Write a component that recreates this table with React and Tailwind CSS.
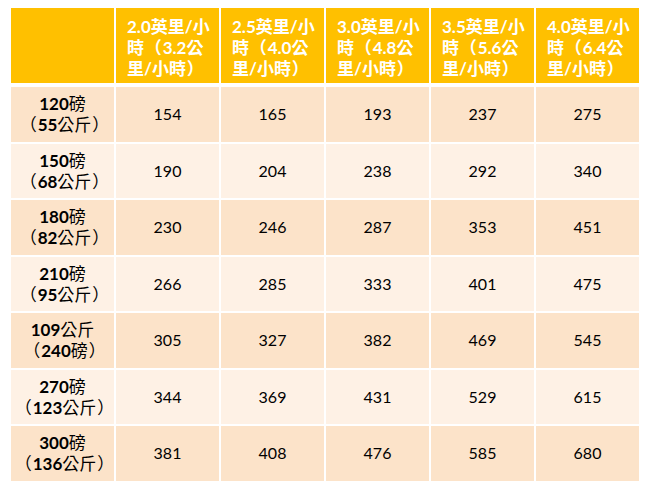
const speeds = [
  ["2.0英里/小", "時（3.2公", "里/小時）"],
  ["2.5英里/小", "時（4.0公", "里/小時）"],
  ["3.0英里/小", "時（4.8公", "里/小時）"],
  ["3.5英里/小", "時（5.6公", "里/小時）"],
  ["4.0英里/小", "時（6.4公", "里/小時）"],
];

const rows = [
  { a: "120磅", b: "（55公斤）", v: [154, 165, 193, 237, 275] },
  { a: "150磅", b: "（68公斤）", v: [190, 204, 238, 292, 340] },
  { a: "180磅", b: "（82公斤）", v: [230, 246, 287, 353, 451] },
  { a: "210磅", b: "（95公斤）", v: [266, 285, 333, 401, 475] },
  { a: "109公斤", b: "（240磅）", v: [305, 327, 382, 469, 545] },
  { a: "270磅", b: "（123公斤）", v: [344, 369, 431, 529, 615] },
  { a: "300磅", b: "（136公斤）", v: [381, 408, 476, 585, 680] },
];

// full-width parens get a full em box, digits go bold, CJK stays regular
function Cell({ text }) {
  const parts = text.match(/[0-9.]+|[（）]|[^0-9.（）]+/g);
  return parts.map((p, i) => {
    if (p === "（" || p === "）")
      return (
        <span key={i} className="inline-block w-[1.1em] text-center">
          {p}
        </span>
      );
    if (/^[0-9.]+$/.test(p))
      return (
        <span key={i} className="font-bold">
          {p}
        </span>
      );
    return <span key={i}>{p}</span>;
  });
}

export default function App() {
  return (
    <div className="w-[650px] h-[488px] bg-white pt-[8px] pl-[11px] font-['Lato','Noto_Sans_CJK_TC',sans-serif]">
      <div className="w-[628px]">
        {/* header */}
        <div className="grid grid-cols-6 gap-x-[2px] h-[75px]">
          <div className="bg-[#ffc000]" />
          {speeds.map((lines, i) => (
            <div
              key={i}
              className="bg-[#ffc000] text-white font-bold text-[17px] leading-[21px] pl-[11px] pt-[8px]"
            >
              {lines.map((l, j) => (
                <div key={j} className="whitespace-nowrap">
                  <Cell text={l} />
                </div>
              ))}
            </div>
          ))}
        </div>

        {/* body */}
        <div className="grid grid-cols-6 gap-x-[2px] gap-y-[2px] auto-rows-[54.5px] mt-[4px]">
          {rows.map((r, i) => {
            const bg = i % 2 === 0 ? "bg-[#fce3c9]" : "bg-[#fef1e5]";
            return [
              <div
                key={`l${i}`}
                className={`${bg} flex flex-col items-center justify-center text-[17px] leading-[21px] text-black`}
              >
                <div className="whitespace-nowrap">
                  <Cell text={r.a} />
                </div>
                <div className="whitespace-nowrap pl-[4px]">
                  <Cell text={r.b} />
                </div>
              </div>,
              ...r.v.map((n, j) => (
                <div
                  key={`c${i}-${j}`}
                  className={`${bg} flex items-center justify-center text-[16px] text-black`}
                >
                  {n}
                </div>
              )),
            ];
          })}
        </div>
      </div>
    </div>
  );
}
